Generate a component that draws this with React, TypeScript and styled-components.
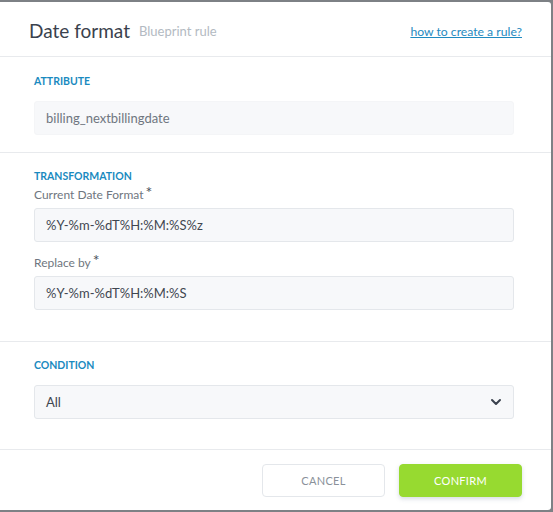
import React from "react";
import styled, { createGlobalStyle } from "styled-components";

const GlobalStyle = createGlobalStyle`
  html, body {
    margin: 0;
    padding: 0;
    background: #7d8185;
  }
  body {
    font-family: "Lato", "Open Sans", sans-serif;
  }
`;

const Backdrop = styled.div`
  width: 553px;
  height: 512px;
  padding-top: 2px;
  box-sizing: border-box;
  overflow: hidden;
`;

const Modal = styled.div`
  width: 551px;
  height: 508px;
  background: #fff;
  border-radius: 0 3px 3px 0;
  display: flex;
  flex-direction: column;
`;

const Header = styled.div`
  height: 55px;
  box-sizing: border-box;
  display: flex;
  align-items: center;
  padding: 2px 29px 0;
  border-bottom: 1px solid #e8eaed;
`;

const Title = styled.h1`
  margin: 0;
  font-size: 19px;
  font-weight: 400;
  color: #3a414d;
`;

const Subtitle = styled.span`
  margin-left: 9px;
  font-size: 13px;
  color: #b3bac2;
  padding-top: 2px;
`;

const HelpLink = styled.a`
  margin-left: auto;
  font-size: 12.2px;
  color: #1f8ac0;
  text-decoration: underline;
  padding-top: 2px;
`;

const Section = styled.div<{ $height: number }>`
  height: ${(p) => p.$height}px;
  box-sizing: border-box;
  padding: 0 37px 0 34px;
  border-bottom: 1px solid #e8eaed;
  display: flex;
  flex-direction: column;
`;

const SectionTitle = styled.div<{ $top: number }>`
  margin-top: ${(p) => p.$top}px;
  font-size: 10.5px;
  font-weight: 700;
  text-transform: uppercase;
  color: #1a8ac0;
  line-height: 14px;
`;

const FieldLabel = styled.label<{ $top: number }>`
  margin-top: ${(p) => p.$top}px;
  font-size: 12px;
  color: #6f7680;
  line-height: 16px;
  display: block;
`;

const Star = styled.span`
  font-size: 16px;
  line-height: 10px;
  color: #4a515b;
  margin-left: 2px;
  position: relative;
  top: -1px;
`;

const Input = styled.div<{ $top: number; $muted?: boolean }>`
  margin-top: ${(p) => p.$top}px;
  height: 34px;
  box-sizing: border-box;
  display: flex;
  align-items: center;
  padding: 0 11px;
  background: #f7f8fa;
  border: 1px solid ${(p) => (p.$muted ? "#f4f5f7" : "#e4e7eb")};
  border-radius: 3px;
  font-size: 13px;
  color: ${(p) => (p.$muted ? "#6f7680" : "#3f4650")};
`;

const Chevron = styled.svg`
  margin-left: auto;
  width: 12px;
  height: 12px;
`;

const Footer = styled.div`
  flex: 1;
  display: flex;
  justify-content: flex-end;
  align-items: flex-start;
  gap: 14px;
  padding: 14px 29px 0 0;
`;

const Button = styled.button<{ $primary?: boolean }>`
  width: 123px;
  height: 33px;
  border-radius: 4px;
  font-family: inherit;
  font-size: 11px;
  letter-spacing: 0.3px;
  text-transform: uppercase;
  cursor: pointer;
  background: ${(p) => (p.$primary ? "#97da30" : "#fff")};
  color: ${(p) => (p.$primary ? "#fff" : "#8a919a")};
  border: 1px solid ${(p) => (p.$primary ? "#97da30" : "#e4e7eb")};
  box-shadow: ${(p) => (p.$primary ? "0 2px 4px rgba(120,140,160,0.3)" : "none")};
`;

export default function App() {
  return (
    <Backdrop>
      <GlobalStyle />
      <Modal>
        <Header>
          <Title>Date format</Title>
          <Subtitle>Blueprint rule</Subtitle>
          <HelpLink href="#">how to create a rule?</HelpLink>
        </Header>

        <Section $height={96}>
          <SectionTitle $top={17}>Attribute</SectionTitle>
          <Input $top={13} $muted>billing_nextbillingdate</Input>
        </Section>

        <Section $height={189}>
          <SectionTitle $top={16}>Transformation</SectionTitle>
          <FieldLabel $top={4}>
            Current Date Format<Star>*</Star>
          </FieldLabel>
          <Input $top={5}>%Y-%m-%dT%H:%M:%S%z</Input>
          <FieldLabel $top={13}>
            Replace by<Star>*</Star>
          </FieldLabel>
          <Input $top={5}>%Y-%m-%dT%H:%M:%S</Input>
        </Section>

        <Section $height={108}>
          <SectionTitle $top={16}>Condition</SectionTitle>
          <Input $top={13}>
            All
            <Chevron viewBox="0 0 12 12">
              <path
                d="M2 4 L6 8 L10 4"
                fill="none"
                stroke="#3a414d"
                strokeWidth="2"
                strokeLinecap="round"
                strokeLinejoin="round"
              />
            </Chevron>
          </Input>
        </Section>

        <Footer>
          <Button>Cancel</Button>
          <Button $primary>Confirm</Button>
        </Footer>
      </Modal>
    </Backdrop>
  );
}
